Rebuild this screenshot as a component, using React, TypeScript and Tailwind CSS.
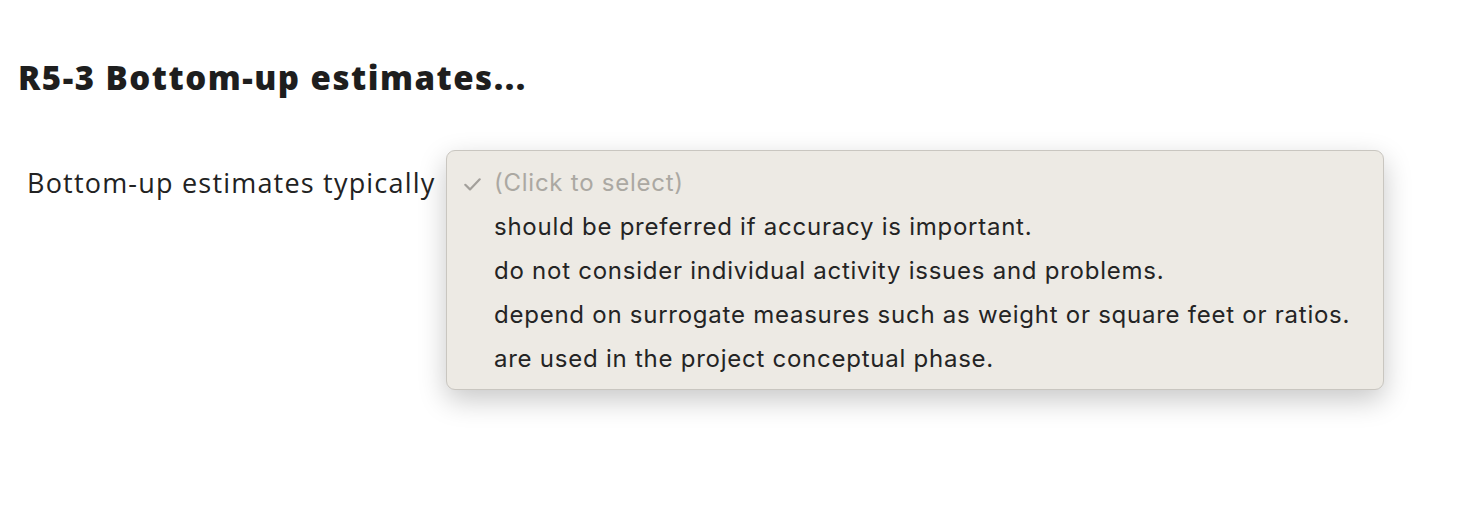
const options = [
  'should be preferred if accuracy is important.',
  'do not consider individual activity issues and problems.',
  'depend on surrogate measures such as weight or square feet or ratios.',
  'are used in the project conceptual phase.',
]

export default function App() {
  return (
    <div className="w-[1458px] h-[530px] bg-white text-[#222]" style={{ fontFamily: '"Open Sans", Lato, sans-serif' }}>
      <div className="pt-[58px] pl-[18px]">
        <h1 className="text-[33px] leading-[40px] font-extrabold tracking-[1.5px] text-[#1e1e1e]">R5-3 Bottom-up estimates...</h1>

        <div className="flex items-start mt-[52px]">
          <span className="ml-[9px] mt-[16px] text-[27px] leading-[34px] tracking-[1.2px] text-[#222] w-[419px] whitespace-nowrap">
            Bottom-up estimates typically
          </span>

          <div
            className="w-[938px] h-[240px] rounded-[9px] bg-[#edeae4] border border-[#c9c6c0] shadow-[0_10px_28px_rgba(0,0,0,0.22)] pt-[10px] pb-[9px]"
            style={{ fontFamily: 'Inter, "Noto Sans", sans-serif' }}
          >
            <div className="flex items-center h-[44px] text-[#aba8a2] text-[24px] tracking-[0.75px]">
              <span className="w-[47px] flex justify-end pr-[13px] pt-[3px]">
                <svg width="17" height="13" viewBox="0 0 17 13" fill="none">
                  <path d="M1.3 6.8 L6 11.4 L15.7 1.3" stroke="#a3a09b" strokeWidth="2.2" strokeLinecap="round" strokeLinejoin="round" />
                </svg>
              </span>
              <span>(Click to select)</span>
            </div>
            {options.map((o) => (
              <div key={o} className="flex items-center h-[44px] pl-[47px] text-[24px] tracking-[0.75px] text-[#242424]">
                {o}
              </div>
            ))}
          </div>
        </div>
      </div>
    </div>
  )
}
